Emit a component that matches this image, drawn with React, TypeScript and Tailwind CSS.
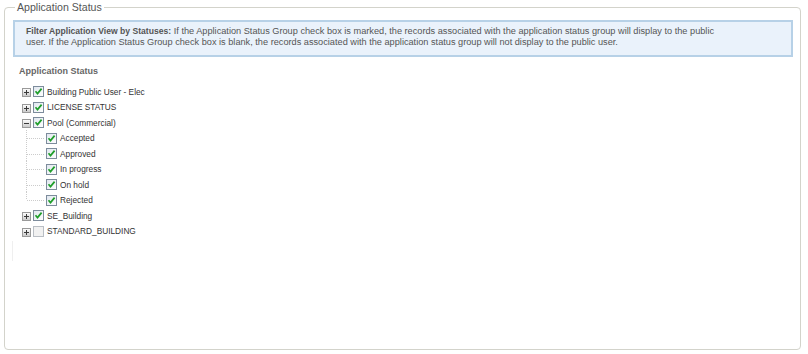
import React from "react";

const font = { fontFamily: '"Liberation Sans", Arial, sans-serif' };

function Expander({ open }: { open?: boolean }) {
  return (
    <svg width="9" height="9" viewBox="0 0 9 9" className="shrink-0 mt-[2px]">
      <defs>
        <linearGradient id="expg" x1="0" y1="0" x2="0" y2="1">
          <stop offset="0" stopColor="#ffffff" />
          <stop offset="1" stopColor="#c8c8c8" />
        </linearGradient>
      </defs>
      <rect x="0.5" y="0.5" width="8" height="8" fill="url(#expg)" stroke="#9a9a9a" />
      <line x1="2" y1="4.5" x2="7" y2="4.5" stroke="#3a3a3a" />
      {!open && <line x1="4.5" y1="2" x2="4.5" y2="7" stroke="#3a3a3a" />}
    </svg>
  );
}

function Check({ checked = true }: { checked?: boolean }) {
  return (
    <svg width="11" height="11" viewBox="0 0 11 11" className="shrink-0">
      <defs>
        <linearGradient id="cbg" x1="0" y1="0" x2="1" y2="1">
          <stop offset="0" stopColor="#dfe6ee" />
          <stop offset="1" stopColor="#ffffff" />
        </linearGradient>
      </defs>
      {checked ? (
        <>
          <rect x="0.5" y="0.5" width="10" height="10" fill="url(#cbg)" stroke="#7d8c9c" />
          <path d="M2.5 5.3 L4.5 7.6 L8.6 2.6" fill="none" stroke="#1f9e2a" strokeWidth="1.7" />
        </>
      ) : (
        <rect x="0.5" y="0.5" width="10" height="10" fill="#f1f1f1" stroke="#b9bec4" />
      )}
    </svg>
  );
}

function Connector({ last }: { last?: boolean }) {
  return (
    <svg width="20" height="16" viewBox="0 0 20 16" className="shrink-0">
      <line x1="0.5" y1="0" x2="0.5" y2={last ? 8 : 16} stroke="#cccccc" strokeDasharray="1 1" />
      <line x1="1" y1="8.5" x2="19" y2="8.5" stroke="#cccccc" strokeDasharray="1 1" />
    </svg>
  );
}

function TopRow({ label, open, checked = true }: { label: string; open?: boolean; checked?: boolean }) {
  return (
    <div className="flex items-center h-[15.5px] pl-[17px]">
      <Expander open={open} />
      <div className="ml-[2px]">
        <Check checked={checked} />
      </div>
      <span className="ml-[3px] text-[8.3px] leading-[10px] text-[#333]">{label}</span>
    </div>
  );
}

function ChildRow({ label, last }: { label: string; last?: boolean }) {
  return (
    <div className="flex items-center h-[15.5px] pl-[21px]">
      <Connector last={last} />
      <Check />
      <span className="ml-[3px] text-[8.3px] leading-[10px] text-[#333]">{label}</span>
    </div>
  );
}

export default function App() {
  return (
    <div className="w-[808px] h-[354px] bg-white overflow-hidden" style={font}>
      <fieldset className="ml-[4px] w-[797px] h-[350px] border border-[#d3d3cb] rounded-[4px] p-0 m-0">
        <legend className="ml-[10px] px-[2px] text-[10.6px] leading-[14px] text-[#555]">
          Application Status
        </legend>
        <div className="ml-[8px] mr-[7px] mt-[6px] border-2 border-[#b7d1e7] bg-[#eaf2fb] pl-[11px] pt-[4px] pb-[7px] text-[9.2px] leading-[11px] text-[#555]">
          <b className="font-bold text-[8.6px] text-[#555]">Filter Application View by Statuses:</b> If the Application Status Group check box is marked, the records associated with the application status group will display to the public
          <br />
          user. If the Application Status Group check box is blank, the records associated with the application status group will not display to the public user.
        </div>
        <div className="ml-[14px] mt-[9px] text-[9px] leading-[11px] font-bold text-[#666]">Application Status</div>
        <div className="mt-[7px]">
          <TopRow label="Building Public User - Elec" />
          <TopRow label="LICENSE STATUS" />
          <TopRow label="Pool (Commercial)" open />
          <ChildRow label="Accepted" />
          <ChildRow label="Approved" />
          <ChildRow label="In progress" />
          <ChildRow label="On hold" />
          <ChildRow label="Rejected" last />
          <TopRow label="SE_Building" />
          <TopRow label="STANDARD_BUILDING" checked={false} />
        </div>
        <div className="ml-[7px] mt-[2px] w-px h-[20px] bg-[#efefef]" />
      </fieldset>
    </div>
  );
}
